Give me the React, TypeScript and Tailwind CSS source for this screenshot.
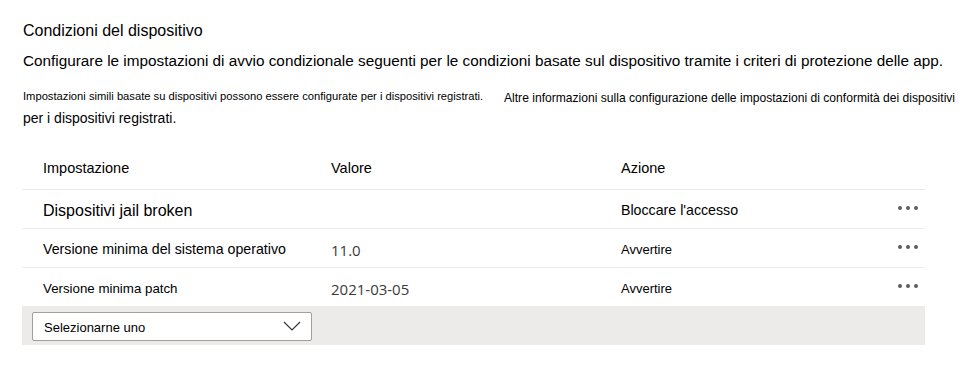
const rows = [
  { name: 'Dispositivi jail broken', value: '', action: "Bloccare l'accesso", nameSize: 'text-[16px]', actionSize: 'text-[14.2px]' },
  { name: 'Versione minima del sistema operativo', value: '11.0', action: 'Avvertire', nameSize: 'text-[14.2px]', actionSize: 'text-[13px]' },
  { name: 'Versione minima patch', value: '2021-03-05', action: 'Avvertire', nameSize: 'text-[13.3px]', actionSize: 'text-[13px]' },
];

function Dots() {
  return (
    <div className="flex gap-[4px] mb-[6px]">
      <span className="w-[4px] h-[4px] rounded-full bg-[#605e5c]" />
      <span className="w-[4px] h-[4px] rounded-full bg-[#605e5c]" />
      <span className="w-[4px] h-[4px] rounded-full bg-[#605e5c]" />
    </div>
  );
}

export default function App() {
  return (
    <div className="w-[975px] h-[366px] bg-white text-black font-['Liberation_Sans',Arial,sans-serif] overflow-hidden">
      <div className="pl-[23px] pt-[21px]">
        <h2 className="text-[16px] leading-[20px]">Condizioni del dispositivo</h2>
        <p className="mt-[11px] text-[15.3px] leading-[18px] whitespace-nowrap">
          Configurare le impostazioni di avvio condizionale seguenti per le condizioni basate sul dispositivo tramite i criteri di protezione delle app.
        </p>
        <div className="mt-[19px] flex items-start whitespace-nowrap">
          <span className="text-[11.2px] leading-[14px] w-[481px]">
            Impostazioni simili basate su dispositivi possono essere configurate per i dispositivi registrati.
          </span>
          <span className="text-[12.1px] leading-[14px] mt-[2px]">
            Altre informazioni sulla configurazione delle impostazioni di conformità dei dispositivi
          </span>
        </div>
        <p className="mt-[5px] text-[14px] leading-[16px]">per i dispositivi registrati.</p>
      </div>

      <div className="ml-[22px] mt-[22px] w-[903px]">
        <div className="grid grid-cols-[288px_290px_1fr_auto] items-center h-[42px] pl-[21px] pr-[7px] border-b border-[#edebe9] text-[14.5px]">
          <span>Impostazione</span>
          <span>Valore</span>
          <span>Azione</span>
          <span />
        </div>
        {rows.map((r) => (
          <div
            key={r.name}
            className="grid grid-cols-[288px_290px_1fr_auto] items-center h-[39px] pt-[4px] pl-[21px] pr-[7px] border-b border-[#edebe9] last:border-b-0"
          >
            <span className={r.nameSize}>{r.name}</span>
            <span className="text-[15px] text-[#3b3a39] font-['Open_Sans',sans-serif]">{r.value}</span>
            <span className={r.actionSize}>{r.action}</span>
            <Dots />
          </div>
        ))}
        <div className="bg-[#edebe9] h-[38px] flex items-center pl-[10px]">
          <div className="w-[280px] h-[29px] bg-white border border-[#a19f9d] rounded-[2px] flex items-center justify-between pl-[11px] pr-[10px]">
            <span className="text-[13px] mt-[3px]">Selezionarne uno</span>
            <svg width="18" height="10" viewBox="0 0 18 10" fill="none" stroke="#323130" strokeWidth="1.1">
              <polyline points="1,1 9,9 17,1" />
            </svg>
          </div>
        </div>
      </div>
    </div>
  );
}
